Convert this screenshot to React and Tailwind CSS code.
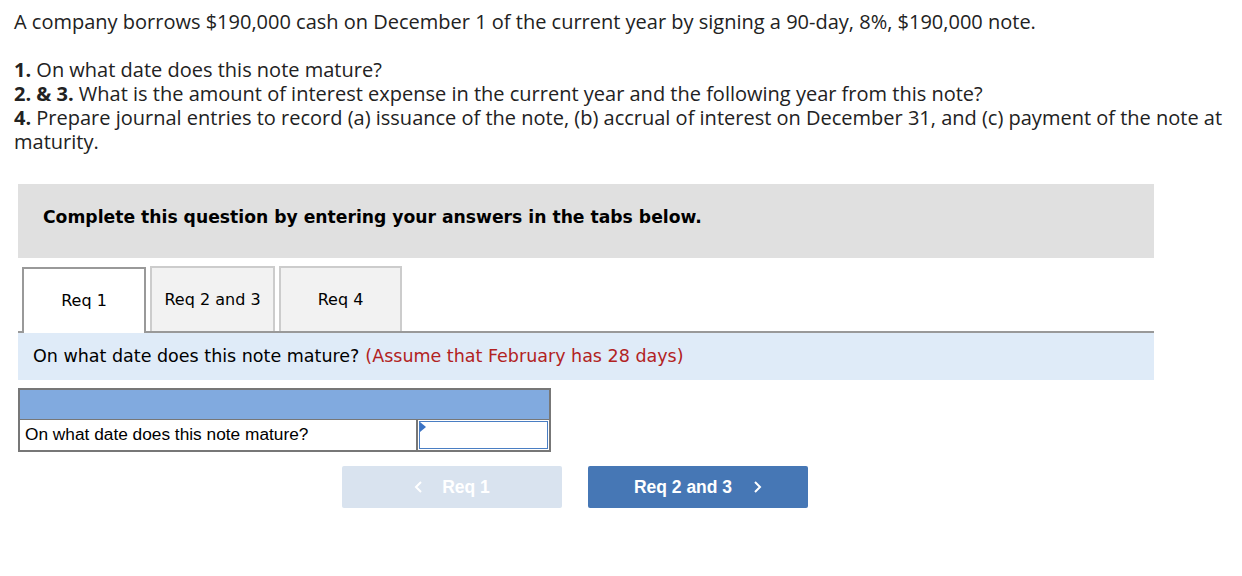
export default function App() {
  return (
    <div className="w-[1242px] h-[576px] bg-white text-[#222] relative">
      {/* Question text */}
      <div className="pl-[14px] pr-[8px] pt-[10px] text-[20px] leading-[24px]" style={{ fontFamily: '"Open Sans", sans-serif' }}>
        <p>A company borrows $190,000 cash on December 1 of the current year by signing a 90-day, 8%, $190,000 note.</p>
        <p className="mt-[24px]"><b>1.</b> On what date does this note mature?</p>
        <p><b>2. &amp; 3.</b> What is the amount of interest expense in the current year and the following year from this note?</p>
        <p><b>4.</b> Prepare journal entries to record (a) issuance of the note, (b) accrual of interest on December 31, and (c) payment of the note at maturity.</p>
      </div>

      <div className="ml-[18px] w-[1136px] mt-[30px]">
        <div className="bg-[#e0e0e0] h-[74px] flex items-center pl-[25px] pb-[6px]">
          <span className="font-bold text-[17.2px] text-black" style={{ fontFamily: '"DejaVu Sans", Verdana, sans-serif' }}>
            Complete this question by entering your answers in the tabs below.
          </span>
        </div>

        {/* Tabs */}
        <div className="mt-[8px] flex items-end gap-[4px] pl-[4px] border-b-2 border-[#999]" style={{ fontFamily: '"DejaVu Sans", Verdana, sans-serif' }}>
          <div className="w-[124px] h-[66px] bg-white border-2 border-b-0 border-[#999] flex items-center justify-center text-[16px] text-black -mb-[2px]">Req 1</div>
          <div className="w-[125px] h-[65px] bg-[#f2f2f2] border-2 border-b-0 border-[#ccc] flex items-center justify-center text-[16px] text-black">Req 2 and 3</div>
          <div className="w-[123px] h-[65px] bg-[#f2f2f2] border-2 border-b-0 border-[#ccc] flex items-center justify-center text-[16px] text-black">Req 4</div>
        </div>

        <div className="bg-[#dfebf8] h-[47px] flex items-center pl-[15px] text-[17.5px]" style={{ fontFamily: '"DejaVu Sans", Verdana, sans-serif' }}>
          <span className="text-black">On what date does this note mature?</span>
          <span className="text-[#b22222] ml-[6px]">(Assume that February has 28 days)</span>
        </div>

        {/* Table */}
        <div className="mt-[8px] w-[533px] border-2 border-[#777]" style={{ fontFamily: '"Liberation Sans", Arial, sans-serif' }}>
          <div className="h-[30px] bg-[#81aadf] border-b border-[#777]"></div>
          <div className="flex h-[30px]">
            <div className="w-[398px] border-r-2 border-[#777] flex items-center pl-[5px] text-[17.3px] text-black">On what date does this note mature?</div>
            <div className="flex-1 relative border border-[#4a7ec3] m-[1px] bg-white">
              <svg className="absolute left-0 top-0" width="7" height="10" viewBox="0 0 7 10"><path d="M0 0 L6 5 L0 10 Z" fill="#3b73c4" /></svg>
            </div>
          </div>
        </div>

        {/* Nav buttons */}
        <div className="mt-[14px] flex gap-[26px] pl-[324px]" style={{ fontFamily: '"Liberation Sans", Arial, sans-serif' }}>
          <div className="w-[220px] h-[42px] bg-[#d9e3ef] rounded-[2px] flex items-center justify-center text-white font-bold text-[17.5px]">
            <svg width="10" height="16" viewBox="0 0 10 16" className="mr-[18px]"><path d="M7 3 L2 8 L7 13" stroke="white" strokeWidth="2" fill="none" /></svg>
            Req 1
          </div>
          <div className="w-[220px] h-[42px] bg-[#4677b5] rounded-[2px] flex items-center justify-center text-white font-bold text-[17.5px]">
            Req 2 and 3
            <svg width="10" height="16" viewBox="0 0 10 16" className="ml-[20px]"><path d="M3 3 L8 8 L3 13" stroke="white" strokeWidth="2" fill="none" /></svg>
          </div>
        </div>
      </div>
    </div>
  )
}
